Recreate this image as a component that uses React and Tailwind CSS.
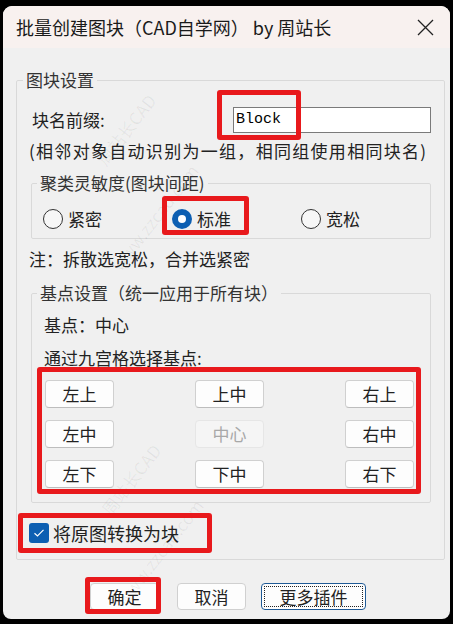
import React from "react";

const F = "font-['Noto_Sans_CJK_SC','Noto_Sans',sans-serif]";

function Radio({ checked, label }) {
  return (
    <div className="flex items-center w-[129px] h-[20px]">
      {checked ? (
        <span className="w-[20px] h-[20px] rounded-full bg-[#0d5fb2] flex items-center justify-center shrink-0">
          <span className="w-[8px] h-[8px] rounded-full bg-white" />
        </span>
      ) : (
        <span className="w-[20px] h-[20px] rounded-full border border-[#333] bg-[#f7f7f7] shrink-0" />
      )}
      <span className="ml-[5px] text-[17px] leading-[20px] text-[#222]">{label}</span>
    </div>
  );
}

function GridBtn({ label, disabled }) {
  return disabled ? (
    <div className="w-[69px] h-[28px] rounded-[4px] bg-[#f5f5f5] border border-[#e6e6e6] flex items-center justify-center text-[17px] text-[#a8a8a8]">
      {label}
    </div>
  ) : (
    <div className="w-[69px] h-[28px] rounded-[4px] bg-[#fdfdfd] border border-[#d0d0d0] border-b-[#bdbdbd] flex items-center justify-center text-[17px] text-[#222]">
      {label}
    </div>
  );
}

function RedBox({ cls }) {
  return <div className={"absolute border-[5px] border-[#e8191c] rounded-[3px] pointer-events-none " + cls} />;
}

function Mark({ cls, text }) {
  return (
    <div className={"absolute pointer-events-none whitespace-nowrap text-[17px] text-black/[0.06] rotate-[-52deg] origin-left " + cls}>
      {text}
    </div>
  );
}

export default function App() {
  return (
    <div className={"relative w-[453px] h-[624px] bg-black overflow-hidden pt-[6px] pl-[3px] " + F}>
      <div className="w-[447px] h-[613px] bg-[#f0f0f0] rounded-t-[9px] rounded-b-[8px] overflow-hidden flex flex-col">
        {/* title bar */}
        <div className="h-[42px] shrink-0 bg-[#f8f1ef] flex items-center justify-between pl-[13px] pr-[16px]">
          <span className="text-[18px] leading-[24px] text-[#1a1a1a] whitespace-nowrap">
            批量创建图块（CAD自学网） by 周站长
          </span>
          <svg width="17" height="17" viewBox="0 0 17 17">
            <path d="M1 1 L16 16 M16 1 L1 16" stroke="#222" strokeWidth="1.3" fill="none" />
          </svg>
        </div>

        {/* body */}
        <div className="flex flex-col pl-[13px]">
          <fieldset className="mt-[22px] w-[426px] border border-[#d9d9d9] rounded-[2px] pb-[15px]">
            <legend className="ml-[6px] px-[3px] text-[17px] leading-[20px] text-[#333]">图块设置</legend>

            <div className="mt-[17px] h-[26px] flex items-center pl-[15px] pr-[13px]">
              <span className="text-[17px] leading-[22px] text-[#222]">块名前缀:</span>
              <div className="ml-auto w-[198px] h-[26px] bg-white border border-[#7a7a7a] flex items-center pl-[2px] font-['Liberation_Mono',monospace] text-[15px] text-black">
                Block
              </div>
            </div>

            <div className="mt-[7px] h-[22px] pl-[12px] text-[17px] leading-[22px] tracking-[1.3px] text-[#222] whitespace-nowrap">
              (相邻对象自动识别为一组，相同组使用相同块名)
            </div>

            <fieldset className="mt-[11px] ml-[14px] mr-[13px] border border-[#d9d9d9] rounded-[2px] pb-[9px]">
              <legend className="ml-[5px] px-[3px] text-[17px] leading-[20px] text-[#333]">聚类灵敏度(图块间距)</legend>
              <div className="mt-[16px] flex pl-[11px]">
                <Radio label="紧密" />
                <Radio label="标准" checked />
                <Radio label="宽松" />
              </div>
            </fieldset>

            <div className="mt-[9px] h-[22px] pl-[12px] text-[17px] leading-[22px] text-[#222]">
              注：拆散选宽松，合并选紧密
            </div>

            <fieldset className="mt-[13px] ml-[14px] mr-[13px] border border-[#d9d9d9] rounded-[2px] pb-[14px]">
              <legend className="ml-[5px] px-[3px] text-[17px] leading-[20px] text-[#333]">基点设置（统一应用于所有块）</legend>
              <div className="mt-[11px] h-[22px] pl-[12px] text-[17px] leading-[22px] text-[#222]">基点：中心</div>
              <div className="mt-[11px] h-[22px] pl-[12px] text-[17px] leading-[22px] text-[#222]">通过九宫格选择基点:</div>
              <div className="mt-[11px] pl-[13px] pr-[16px] flex flex-col gap-[12px]">
                <div className="flex justify-between">
                  <GridBtn label="左上" />
                  <GridBtn label="上中" />
                  <GridBtn label="右上" />
                </div>
                <div className="flex justify-between">
                  <GridBtn label="左中" />
                  <GridBtn label="中心" disabled />
                  <GridBtn label="右中" />
                </div>
                <div className="flex justify-between">
                  <GridBtn label="左下" />
                  <GridBtn label="下中" />
                  <GridBtn label="右下" />
                </div>
              </div>
            </fieldset>

            <div className="mt-[19px] h-[22px] flex items-center pl-[12px]">
              <span className="w-[20px] h-[20px] rounded-[3px] bg-[#0d5fb2] flex items-center justify-center">
                <svg width="12" height="10" viewBox="0 0 12 10">
                  <path d="M1.5 5.2 L4.5 8 L10.5 1.8" stroke="white" strokeWidth="1.2" fill="none" />
                </svg>
              </span>
              <span className="ml-[4px] text-[18px] leading-[22px] text-[#222]">将原图转换为块</span>
            </div>
          </fieldset>
        </div>

        {/* bottom buttons */}
        <div className="mt-[23px] flex items-center pl-[87px]">
          <div className="w-[69px] h-[27px] rounded-[4px] bg-[#fdfdfd] border border-[#d0d0d0] flex items-center justify-center text-[17px] text-[#222]">
            确定
          </div>
          <div className="ml-[18px] w-[69px] h-[27px] rounded-[4px] bg-[#fdfdfd] border border-[#d0d0d0] flex items-center justify-center text-[17px] text-[#222]">
            取消
          </div>
          <div className="ml-[15px] w-[105px] h-[27px] rounded-[4px] bg-[#fdfdfd] border border-[#1f5a96] p-[2px]">
            <div className="w-full h-full border border-dotted border-[#222] flex items-center justify-center text-[17px] text-[#222]">
              更多插件
            </div>
          </div>
        </div>
      </div>

      {/* watermarks */}
      <Mark cls="left-[100px] top-[150px]" text="周站长CAD" />
      <Mark cls="left-[115px] top-[255px]" text="www.zzcad.com" />
      <Mark cls="left-[105px] top-[500px]" text="周站长CAD" />
      <Mark cls="left-[120px] top-[590px]" text="www.zzcad.com" />

      {/* red annotation boxes */}
      <RedBox cls="left-[217px] top-[90px] w-[84px] h-[50px]" />
      <RedBox cls="left-[162px] top-[196px] w-[87px] h-[39px]" />
      <RedBox cls="left-[37px] top-[367px] w-[384px] h-[127px]" />
      <RedBox cls="left-[18px] top-[513px] w-[194px] h-[40px]" />
      <RedBox cls="left-[85px] top-[577px] w-[76px] h-[37px]" />
    </div>
  );
}
